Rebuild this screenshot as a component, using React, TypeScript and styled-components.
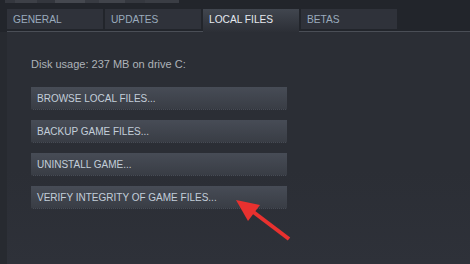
import React from 'react';
import styled, { createGlobalStyle } from 'styled-components';

const GlobalStyle = createGlobalStyle`
  html, body {
    margin: 0;
    padding: 0;
    background: #22252b;
  }
  body {
    font-family: "Liberation Sans", Arial, sans-serif;
    font-size: 10px;
  }
`;

const Page = styled.div`
  position: relative;
  width: 470px;
  height: 264px;
  overflow: hidden;
  display: flex;
  flex-direction: column;
  background: #22252b;
`;

const TopStrip = styled.div`
  height: 9px;
  display: flex;
  padding-left: 5px;
  align-items: flex-start;
`;

const Smudge = styled.div<{ $w: number; $c: string }>`
  width: ${p => p.$w}px;
  height: 3px;
  background: ${p => p.$c};
`;

const TabRow = styled.div`
  display: flex;
  gap: 2px;
  margin-left: 7px;
  height: 22px;
  border-bottom: 1px solid #4a4e56;
`;

const Tab = styled.div<{ $active?: boolean }>`
  width: 96px;
  height: ${p => (p.$active ? '23px' : '20px')};
  box-sizing: border-box;
  padding-left: 6px;
  display: flex;
  align-items: ${p => (p.$active ? 'flex-start' : 'center')};
  padding-top: ${p => (p.$active ? '4px' : '0')};
  font-size: 10.2px;
  line-height: 13px;
  color: ${p => (p.$active ? '#e4e8ee' : '#9aabbd')};
  background: ${p =>
    p.$active ? 'linear-gradient(to bottom, #41464f, #2c2f36)' : '#2f323a'};
  position: relative;
  z-index: 1;
`;

const Body = styled.div`
  flex: 1;
  display: flex;
  background: linear-gradient(to bottom, #2b2e35 0%, #2b2e35 60%, #2e3139 100%);
`;

const Rail = styled.div`
  width: 7px;
  background: #272a30;
`;

const Content = styled.div`
  flex: 1;
  padding: 26px 0 0 24px;
  display: flex;
  flex-direction: column;
`;

const Usage = styled.div`
  font-size: 11px;
  line-height: 13px;
  color: #aeb3b9;
  margin-bottom: 16px;
`;

const Actions = styled.div`
  display: flex;
  flex-direction: column;
  gap: 10px;
  width: 256px;
`;

const ActionButton = styled.div`
  height: 23px;
  box-sizing: border-box;
  padding-left: 6px;
  display: flex;
  align-items: center;
  font-size: 10px;
  color: #c3ceda;
  background: linear-gradient(to bottom, #474c56, #393d45);
  border-bottom: 1px dotted #30333a;
`;

const Pointer = styled.svg`
  position: absolute;
  left: 0;
  top: 0;
  pointer-events: none;
`;

const smudges: [number, string][] = [
  [10, '#34373e'],
  [22, '#3d4047'],
  [18, '#33363d'],
  [30, '#45484f'],
  [14, '#383b42'],
  [26, '#41444b'],
  [20, '#35383f'],
  [34, '#3a3d44'],
];

const tabs = ['GENERAL', 'UPDATES', 'LOCAL FILES', 'BETAS'];
const actions = [
  'BROWSE LOCAL FILES...',
  'BACKUP GAME FILES...',
  'UNINSTALL GAME...',
  'VERIFY INTEGRITY OF GAME FILES...',
];

export default function App() {
  return (
    <Page>
      <GlobalStyle />
      <TopStrip>
        {smudges.map(([w, c], i) => (
          <Smudge key={i} $w={w} $c={c} />
        ))}
      </TopStrip>
      <TabRow>
        {tabs.map(t => (
          <Tab key={t} $active={t === 'LOCAL FILES'}>
            {t}
          </Tab>
        ))}
      </TabRow>
      <Body>
        <Rail />
        <Content>
          <Usage>Disk usage: 237 MB on drive C:</Usage>
          <Actions>
            {actions.map(a => (
              <ActionButton key={a}>{a}</ActionButton>
            ))}
          </Actions>
        </Content>
      </Body>

      {/* red annotation arrow pointing at the verify button */}
      <Pointer width="470" height="264" viewBox="0 0 470 264">
        <line x1="289" y1="239" x2="252" y2="211" stroke="#e8312f" strokeWidth="4" strokeLinecap="butt" />
        <polygon points="236,200 260,205 248,221" fill="#e8312f" />
      </Pointer>
    </Page>
  );
}
